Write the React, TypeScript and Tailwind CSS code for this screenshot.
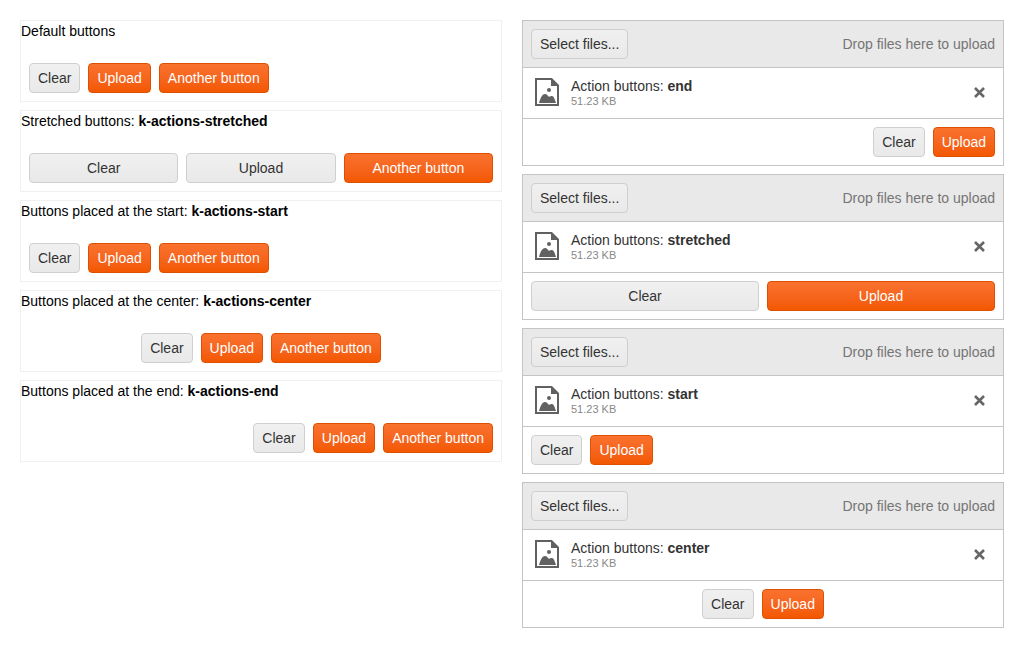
import type { ReactNode } from "react"

const font = "font-['Liberation_Sans',Arial,sans-serif]"

const demos = [
    { label: "Default buttons", cls: "", justify: "justify-start", stretched: false },
    { label: "Stretched buttons: ", cls: "k-actions-stretched", justify: "justify-start", stretched: true },
    { label: "Buttons placed at the start: ", cls: "k-actions-start", justify: "justify-start", stretched: false },
    { label: "Buttons placed at the center: ", cls: "k-actions-center", justify: "justify-center", stretched: false },
    { label: "Buttons placed at the end: ", cls: "k-actions-end", justify: "justify-end", stretched: false },
]

const uploads = [
    { name: "end", justify: "justify-end", stretched: false },
    { name: "stretched", justify: "justify-start", stretched: true },
    { name: "start", justify: "justify-start", stretched: false },
    { name: "center", justify: "justify-center", stretched: false },
]

function Btn({ primary, grow, children }: { primary?: boolean; grow?: boolean; children: ReactNode }) {
    return (
        <button
            className={`h-[30px] px-2 rounded-[4px] border text-sm leading-5 text-center whitespace-nowrap ${grow ? "flex-1" : ""} ${
                primary
                    ? "border-[#de5000] text-white bg-gradient-to-b from-[#f9722e] to-[#f35800]"
                    : "border-[#cfcfcf] text-[#333333] bg-gradient-to-b from-[#f0f0f0] to-[#e9e9e9]"
            }`}
        >
            {children}
        </button>
    )
}

function FileIcon() {
    return (
        <svg width="24" height="28" viewBox="0 0 24 28" className="shrink-0 mb-[2px]">
            <path d="M1 1h15.5L23 7.5V27H1Z" fill="none" stroke="#616161" strokeWidth="2" />
            <path d="M16 0v8h8L16 0Z" fill="#616161" />
            <circle cx="14" cy="12" r="2" fill="#616161" />
            <path d="M4 25c1-4 3-9 6-9 2 0 3 2 4 3 1-1 2-1 3-1 2 0 3 4 4 7Z" fill="#616161" />
        </svg>
    )
}

function CloseIcon() {
    return (
        <svg width="11" height="11" viewBox="0 0 11 11" className="shrink-0 mb-[2px]">
            <path d="M1 1l9 9M10 1l-9 9" stroke="#666666" strokeWidth="2.6" />
        </svg>
    )
}

function Demo({ label, cls, justify, stretched }: (typeof demos)[number]) {
    return (
        <div className="border border-[#f0f0f0] bg-white">
            <div className="h-5 text-sm leading-5 text-black">
                {label}
                {cls && <b>{cls}</b>}
            </div>
            <div className={`flex gap-2 mt-[14px] p-2 ${justify}`}>
                <Btn grow={stretched}>Clear</Btn>
                <Btn grow={stretched} primary={!stretched}>Upload</Btn>
                <Btn grow={stretched} primary>Another button</Btn>
            </div>
        </div>
    )
}

function Upload({ name, justify, stretched }: (typeof uploads)[number]) {
    return (
        <div className="border border-[#c4c4c4] bg-white">
            <div className="flex items-center justify-between p-2 bg-[#e9e9e9] border-b border-[#c4c4c4]">
                <Btn>Select files...</Btn>
                <span className="text-sm text-[#757575]">Drop files here to upload</span>
            </div>
            <div className="flex items-center h-[51px] pl-3 pr-[18px] border-b border-[#c4c4c4]">
                <FileIcon />
                <div className="ml-3 flex-1">
                    <div className="text-sm leading-4 text-[#333333]">
                        Action buttons: <b>{name}</b>
                    </div>
                    <div className="text-[11px] leading-[13px] mt-px text-[#888888]">51.23 KB</div>
                </div>
                <CloseIcon />
            </div>
            <div className={`flex gap-2 p-2 ${justify}`}>
                <Btn grow={stretched}>Clear</Btn>
                <Btn grow={stretched} primary>Upload</Btn>
            </div>
        </div>
    )
}

export default function App() {
    return (
        <main className={`min-h-screen bg-white p-5 grid grid-cols-2 gap-5 items-start ${font}`}>
            <div className="flex flex-col gap-2">
                {demos.map((d) => (
                    <Demo key={d.label} {...d} />
                ))}
            </div>
            <div className="flex flex-col gap-2">
                {uploads.map((u) => (
                    <Upload key={u.name} {...u} />
                ))}
            </div>
        </main>
    )
}
